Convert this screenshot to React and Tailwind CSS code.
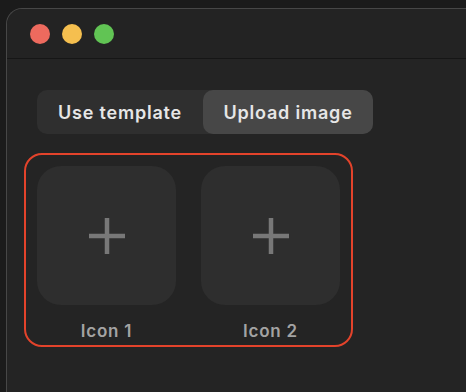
export default function App() {
  const font = { fontFamily: 'Inter, "Noto Sans", sans-serif' };
  return (
    <div className="w-[466px] h-[392px] bg-[#1b1b1b] overflow-hidden pl-[6px] pt-[8px]" style={font}>
      <div className="h-[400px] w-[480px] bg-[#242424] border-l border-t border-[#474747] rounded-tl-[16px] flex flex-col">
        <div className="h-[50px] flex items-center pl-[23px] gap-[12px] border-b border-[#161616] bg-[#232323] rounded-tl-[16px]">
          <div className="w-[20px] h-[20px] rounded-full bg-[#ed6a5e]" />
          <div className="w-[20px] h-[20px] rounded-full bg-[#f5bf4f]" />
          <div className="w-[20px] h-[20px] rounded-full bg-[#61c454]" />
        </div>
        <div className="flex flex-col items-start pt-[31px] pl-[17px]">
          <div className="ml-[13px] flex w-[336px] h-[44px] rounded-[10px] bg-[#2f2f2f]">
            <div className="w-[166px] flex items-center justify-center text-[18px] tracking-[0.8px] font-semibold text-[#e6e6e6]">
              Use template
            </div>
            <div className="flex-1 flex items-center justify-center rounded-[10px] bg-[#474747] text-[18px] tracking-[0.8px] font-semibold text-[#e6e6e6]">
              Upload image
            </div>
          </div>
          <div className="mt-[19px] w-[329px] border-2 border-[#e3432b] rounded-[18px] pt-[11px] px-[11px] pb-[4px] flex gap-[25px]">
            {["Icon 1", "Icon 2"].map((l) => (
              <div key={l} className="flex flex-col items-center w-[139px]">
                <div className="shrink-0 w-[139px] h-[139px] rounded-[24px] bg-[#2e2e2e] flex items-center justify-center">
                  <svg width="38" height="38" viewBox="0 0 38 38">
                    <path d="M19 1V37M1 19H37" stroke="#787878" strokeWidth="4.5" />
                  </svg>
                </div>
                <div className="mt-[16px] text-[17px] tracking-[0.8px] font-semibold text-[#a3a3a3] leading-[20px]">{l}</div>
              </div>
            ))}
          </div>
        </div>
      </div>
    </div>
  );
}
